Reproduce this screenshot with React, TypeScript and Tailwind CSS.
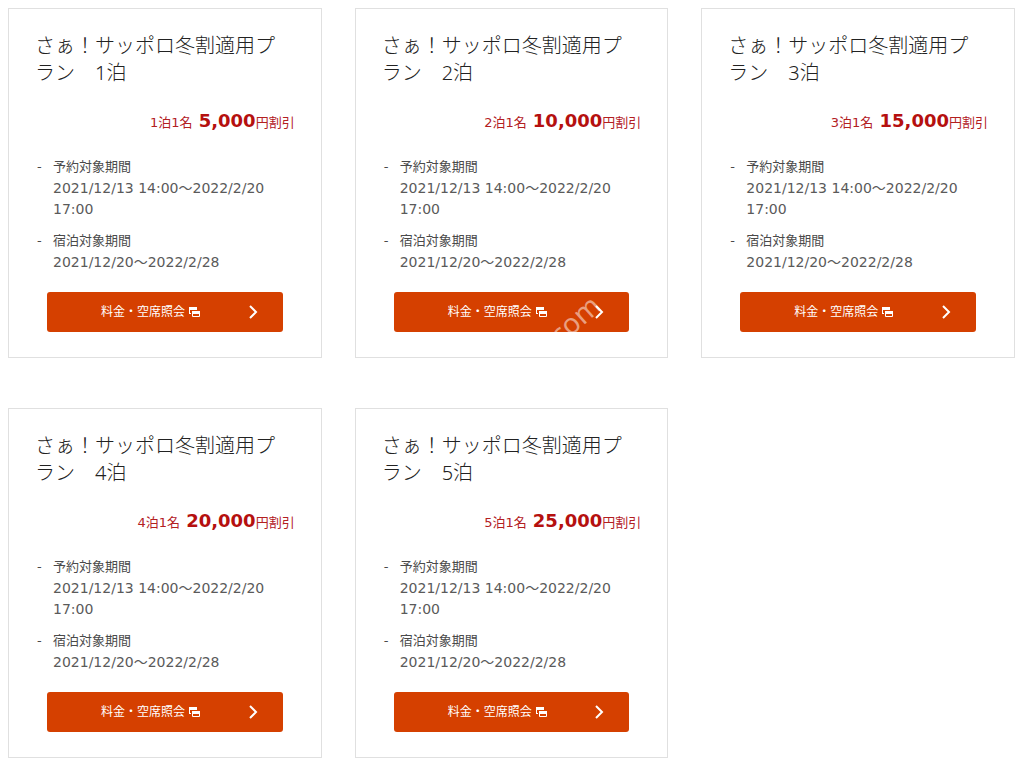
type Plan = {
  nights: number
  discount: string
}

const PLANS: Plan[] = [
  { nights: 1, discount: '5,000' },
  { nights: 2, discount: '10,000' },
  { nights: 3, discount: '15,000' },
  { nights: 4, discount: '20,000' },
  { nights: 5, discount: '25,000' },
]

const PERIODS = [
  { label: '予約対象期間', value: '2021/12/13 14:00～2022/2/20 17:00' },
  { label: '宿泊対象期間', value: '2021/12/20～2022/2/28' },
]

// ── Icons ────────────────────────────────────────────────────────────────────
function NewWindowIcon() {
  return (
    <svg width="11" height="10" viewBox="0 0 11 10" fill="none" aria-hidden="true">
      <path d="M0 0h8v3H1v3h1v1H0z" fill="#fff" />
      <path d="M3.5 4.5h7v5h-7z" stroke="#fff" />
      <path d="M3 4h8v3H3z" fill="#fff" />
    </svg>
  )
}

function ChevronIcon() {
  return (
    <svg width="10" height="14" viewBox="0 0 10 14" fill="none" aria-hidden="true">
      <path d="M1 1l6 6-6 6" stroke="#fff" strokeWidth="2" />
    </svg>
  )
}

// ── Card ─────────────────────────────────────────────────────────────────────
function PlanCard({ plan }: { plan: Plan }) {
  return (
    <article className="border border-[#e0e0e0] bg-white px-[26px] pt-[23px] pb-[25px]">
      <h2 className="font-['Noto_Sans','Noto_Sans_CJK_JP',sans-serif] text-xl leading-[27px] font-light text-[#222]">
        {`さぁ！サッポロ冬割適用プラン　${plan.nights}泊`}
      </h2>

      <p className="mt-[21px] text-right text-[13px] leading-[27px] text-[#b3201f]">
        {`${plan.nights}泊1名 `}
        <strong className="ml-0.5 text-lg leading-[27px] font-bold text-[#b5100f]">{plan.discount}</strong>
        円割引
      </p>

      <ul className="mt-5 flex flex-col gap-[10px] text-[#4a4a4a]">
        {PERIODS.map((period) => (
          <li key={period.label} className="flex text-[13px] leading-[22px]">
            <span className="w-[18px] shrink-0 pl-0.5">-</span>
            <div>
              <p>{period.label}</p>
              <p className="text-sm leading-[21px] text-[#5a5a5a]">{period.value}</p>
            </div>
          </li>
        ))}
      </ul>

      <a
        href="#"
        className="mx-3 mt-[19px] flex h-10 items-center rounded-[3px] bg-[#d54000] pr-6 pl-[54px] text-xs text-white"
      >
        料金・空席照会
        <span className="ml-1">
          <NewWindowIcon />
        </span>
        <span className="ml-auto">
          <ChevronIcon />
        </span>
      </a>
    </article>
  )
}

// ── App ──────────────────────────────────────────────────────────────────────
export default function App() {
  return (
    <main className="relative bg-white pt-2 pr-[9px] pb-[7px] pl-2 font-['DejaVu_Sans','Noto_Sans_CJK_JP',sans-serif]">
      <div className="grid grid-cols-3 gap-x-[33px] gap-y-[50px]">
        {PLANS.map((plan) => (
          <PlanCard key={plan.nights} plan={plan} />
        ))}
      </div>

      {/* Watermark */}
      <span className="pointer-events-none absolute top-[303px] left-[546px] -rotate-[42deg] font-['Noto_Sans',sans-serif] text-[28px] leading-8 text-white/50">
        com
      </span>
    </main>
  )
}
